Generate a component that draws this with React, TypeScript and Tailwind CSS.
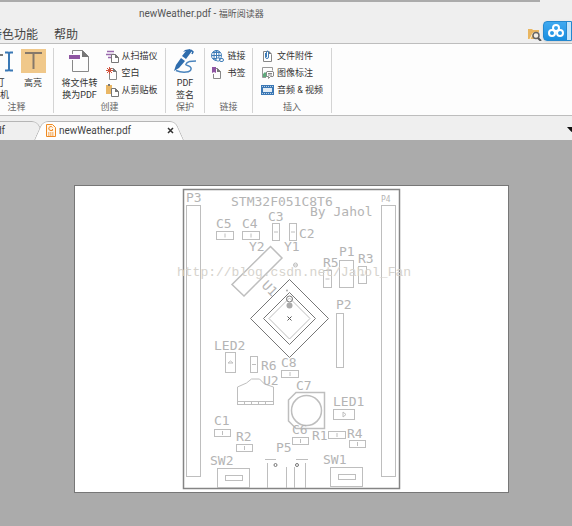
import type { ReactNode } from "react";

type Part = { x: number; y: number; w: number; h: number; mark?: "v" | "h" };
type Label = { text: string; x: number; y: number };

const parts: Part[] = [
  { x: 186, y: 205, w: 14, h: 271 },
  { x: 381, y: 205, w: 14, h: 271 },
  { x: 216, y: 231, w: 17, h: 8, mark: "v" },
  { x: 242, y: 231, w: 17, h: 8, mark: "v" },
  { x: 272, y: 223, w: 7, h: 17, mark: "h" },
  { x: 289, y: 223, w: 7, h: 17, mark: "h" },
  { x: 339, y: 260, w: 14, h: 27 },
  { x: 323, y: 270, w: 8, h: 17, mark: "h" },
  { x: 358, y: 266, w: 8, h: 17, mark: "h" },
  { x: 336, y: 313, w: 7, h: 54 },
  { x: 225, y: 352, w: 10, h: 20 },
  { x: 250, y: 356, w: 7, h: 16, mark: "h" },
  { x: 281, y: 370, w: 17, h: 7, mark: "v" },
  { x: 333, y: 409, w: 21, h: 10 },
  { x: 214, y: 429, w: 16, h: 7, mark: "v" },
  { x: 236, y: 444, w: 16, h: 7, mark: "v" },
  { x: 292, y: 437, w: 16, h: 7, mark: "v" },
  { x: 328, y: 431, w: 17, h: 7, mark: "v" },
  { x: 349, y: 440, w: 16, h: 7, mark: "v" },
  { x: 217, y: 468, w: 32, h: 19 },
  { x: 225, y: 475, w: 17, h: 5 },
  { x: 330, y: 467, w: 32, h: 19 },
  { x: 338, y: 474, w: 17, h: 5 },
];

const labels: Label[] = [
  { text: "P3", x: 186, y: 202 },
  { text: "STM32F051C8T6", x: 231, y: 206 },
  { text: "By Jahol", x: 310, y: 216 },
  { text: "C5", x: 216, y: 228 },
  { text: "C4", x: 242, y: 228 },
  { text: "C3", x: 268, y: 221 },
  { text: "C2", x: 299, y: 238 },
  { text: "Y2", x: 249, y: 251 },
  { text: "Y1", x: 284, y: 251 },
  { text: "P1", x: 339, y: 256 },
  { text: "R5", x: 323, y: 267 },
  { text: "R3", x: 358, y: 263 },
  { text: "P2", x: 336, y: 309 },
  { text: "LED2", x: 214, y: 350 },
  { text: "R6", x: 261, y: 370 },
  { text: "C8", x: 281, y: 367 },
  { text: "U2", x: 263, y: 385 },
  { text: "C7", x: 296, y: 390 },
  { text: "LED1", x: 333, y: 406 },
  { text: "C1", x: 214, y: 425 },
  { text: "R2", x: 236, y: 441 },
  { text: "C6", x: 292, y: 434 },
  { text: "R1", x: 312, y: 440 },
  { text: "R4", x: 347, y: 438 },
  { text: "P5", x: 276, y: 452 },
  { text: "SW2", x: 210, y: 465 },
  { text: "SW1", x: 323, y: 464 },
];

function Svg({ w, h, children }: { w: number; h: number; children: ReactNode }) {
  return (
    <svg width={w} height={h} viewBox={`0 0 ${w} ${h}`} fill="none" className="shrink-0" aria-hidden="true">
      {children}
    </svg>
  );
}

const TypewriterIcon = () => (
  <Svg w={25} h={25}>
    <path d="M1 7H15M8 7V20" stroke="#777" strokeWidth="2" />
    <path d="M17 4.500h3l1 1 1-1h3M17 22.500h3l1-1 1 1h3M21 5.500V22" stroke="#3a78b5" strokeWidth="2" />
  </Svg>
);

const HighlightIcon = () => (
  <Svg w={25} h={25}>
    <path fill="#f0c88a" d="M0 1h25v24H0z" />
    <path d="M4 5H21M12.500 5V21" stroke="#85786a" strokeWidth="2" />
  </Svg>
);

const ConvertIcon = () => (
  <Svg w={21} h={25}>
    <path d="M3.500 6V2.500h10l6 6v15h-16V12" stroke="#888" />
    <path d="M13 2v7h7z" fill="#777" />
    <path fill="#8e55a2" d="M0 7h11v4H0z" />
  </Svg>
);

const SignIcon = () => (
  <Svg w={24} h={25}>
    <path d="M12 2l5-1 2 2-6 8-4-3 4-5-3 1z" fill="#2f6dad" />
    <path d="M18 2l2 2-1 2" stroke="#2f6dad" strokeWidth="1.500" />
    <path d="M8 10l4 3-6 7-5 3 2-6z" fill="#2f6dad" />
    <path d="M3 22.500C9 25 19 25 18 20c-1-3-6-2-5-4 1-3 5-3 10-3" stroke="#4a84bd" strokeWidth="1.500" />
  </Svg>
);

const Sheet = () => (
  <>
    <path d="M5.500 4.500h4l3 3v5h-7z" fill="#fff" stroke="#777" />
    <path d="M9 4v4h4z" fill="#777" />
  </>
);

const ScannerIcon = () => (
  <Svg w={13} h={13}>
    <path d="M1 1.500h7M0 4.500h8M2 7.500h3" stroke="#9a6aae" strokeWidth="1.500" />
    <Sheet />
  </Svg>
);

const BlankIcon = () => (
  <Svg w={13} h={13}>
    <path d="M3.500 1.500h4l3 3v8h-7z" fill="#fff" stroke="#888" />
    <path d="M7 1v4h4z" fill="#777" />
    <path d="M3.500 0v7M0 3.500h7M1 1l5 5M6 1L1 6" stroke="#d2533d" />
  </Svg>
);

const ClipboardIcon = () => (
  <Svg w={13} h={13}>
    <path fill="#eab765" d="M0 1h6v9H0z" />
    <path fill="#777" d="M2 0h2v2H2z" />
    <Sheet />
  </Svg>
);

const LinkIcon = () => (
  <Svg w={13} h={13}>
    <circle cx="5.500" cy="5.500" r="5" stroke="#3f7db8" />
    <path d="M.5 5.500h10M5.500.5v10M2 2.500h7M2 8.500h7" stroke="#3f7db8" />
    <ellipse cx="5.500" cy="5.500" rx="2.500" ry="5" stroke="#3f7db8" />
    <rect x="5" y="8" width="4" height="3" rx="1.500" fill="#fff" stroke="#3f7db8" />
    <rect x="8.500" y="8.500" width="4" height="3" rx="1.500" stroke="#3f7db8" />
  </Svg>
);

const BookmarkIcon = () => (
  <Svg w={13} h={13}>
    <path d="M2.500 7v4.500h7V4.500l-3-3H5" stroke="#888" />
    <path d="M6 1v4h4z" fill="#777" />
    <path d="M1 0h4v6L3 5 1 6z" fill="#8e55a2" />
  </Svg>
);

const AttachIcon = () => (
  <Svg w={13} h={13}>
    <path d="M2.500 1.500h5l3 3v7h-8z" fill="#fff" stroke="#888" />
    <path d="M8 1v3h3z" fill="#777" />
    <path d="M4.500 3v4a1.500 1.500 0 003 0V2a1 1 0 00-2 0v5" stroke="#3f7db8" />
  </Svg>
);

const ImageNoteIcon = () => (
  <Svg w={13} h={13}>
    <path d="M5 10.500H1.500V.5h10v3" stroke="#999" />
    <path d="M2 10V7l2-2 2 2v3z" fill="#5faa7c" />
    <path d="M6 4.500h6l.5.500v4l-.5.500H9.500l-2 2v-2H6l-.5-.5V5z" fill="#fff" stroke="#888" />
    <path d="M7 6.500h4M7 8h4" stroke="#888" />
  </Svg>
);

const FilmIcon = () => (
  <Svg w={13} h={13}>
    <path fill="#3b78b5" d="M0 1h13v10H0z" />
    <path fill="#e3edf6" d="M2 4h9v4H2z" />
    <path d="M1 2.500h11M1 9.500h11" stroke="#b9d0e6" strokeDasharray="1 1" />
  </Svg>
);

const PdfTabIcon = () => (
  <Svg w={10} h={13}>
    <path d="M.5.500h6l3 3v9h-9z" fill="#fff5e8" stroke="#ef8a22" />
    <path d="M6.500 3.500A2 2 0 105 6.500h1.500V5" stroke="#ef8a22" />
    <path d="M2 9h6M2 11h6" stroke="#ef8a22" strokeDasharray="1.500 .5" />
  </Svg>
);

const FindFolderIcon = () => (
  <Svg w={14} h={13}>
    <path d="M0 1h4l1 1h6v9H0z" fill="#e9b661" />
    <path d="M2 11l3-6h6" stroke="#fff3d8" />
    <circle cx="8" cy="7.500" r="3" fill="#f5efe4" stroke="#666" strokeWidth="1.500" />
    <path d="M10 10l3 3" stroke="#555" strokeWidth="2" />
  </Svg>
);

const CloudIcon = () => (
  <Svg w={16} h={14}>
    <g stroke="#fff" strokeWidth="2">
      <circle cx="8" cy="4" r="3" />
      <circle cx="4" cy="9" r="3" />
      <circle cx="12" cy="9" r="3" />
    </g>
  </Svg>
);

function BigButton({ icon, lines }: { icon: ReactNode; lines: string[] }) {
  return (
    <button type="button" className="flex shrink-0 flex-col items-center gap-1 leading-3">
      {icon}
      <span className="flex flex-col items-center">
        {lines.map((line) => (
          <span key={line}>{line}</span>
        ))}
      </span>
    </button>
  );
}

function SmallButton({ icon, label }: { icon: ReactNode; label: string }) {
  return (
    <button type="button" className="flex h-[17px] items-center gap-[3px] whitespace-nowrap">
      {icon}
      {label}
    </button>
  );
}

function Group({ title, className, children }: { title: string; className: string; children: ReactNode }) {
  return (
    <section className={`mt-1 mb-0.5 flex shrink-0 flex-col border-r border-[#d4d4d4] ${className}`}>
      <div className="flex flex-1 items-start justify-center gap-4">{children}</div>
      <h2 className="text-center leading-3 text-[#666]">{title}</h2>
    </section>
  );
}

function TabShape({ fill }: { fill: string }) {
  return (
    <span className="absolute inset-0 flex" aria-hidden="true">
      <span className={`flex-1 origin-bottom-left -skew-x-[24deg] rounded-tl-md border-t border-l border-[#b5b5b5] ${fill}`} />
      <span className={`-ml-5 flex-1 origin-bottom-right skew-x-[24deg] rounded-tr-md border-t border-r border-[#b5b5b5] ${fill}`} />
    </span>
  );
}

function Board() {
  return (
    <svg viewBox="75 186 433 306" className="block w-full" role="img" aria-label="STM32F051C8T6">
      <rect x="183.500" y="189.500" width="216" height="299" fill="none" stroke="#858585" strokeWidth="1.500" />
      <g fill="none" stroke="#bebebe">
        {parts.map((p) => {
          const cx = p.x + p.w / 2 + 0.5;
          const cy = p.y + p.h / 2 + 0.5;
          return (
            <g key={`${p.x}-${p.y}`}>
              <rect x={p.x + 0.5} y={p.y + 0.5} width={p.w} height={p.h} />
              {p.mark === "v" && <path d={`M${cx} ${cy - 2}v4`} />}
              {p.mark === "h" && <path d={`M${cx - 2} ${cy}h4`} />}
            </g>
          );
        })}
        <path d="M270.500 246.500L282 258L244 296L232 284.500Z" strokeWidth="1.500" />
        <circle cx="295.500" cy="265" r="2" />
        <path d="M294 265h3" />
        <path d="M228 363l2.500-2 2.500 2zM343 412v5l3-2.500z" />
        <path d="M237.500 405V387l9-4 5-4h8l5 5 9 3v18M237 401.500h36M237 404.500h36M244.500 402v3M251.500 402v3M258.500 402v3M265.500 402v3" />
        <path d="M296 392.500h28.500v36H296l-7.500-7.500v-21z" strokeWidth="1.500" />
        <circle cx="306.500" cy="410.500" r="15" strokeWidth="1.500" />
        <path d="M265 459.500h11M296 459.500h12M267.500 463v25M286.500 467v21M305.500 463v25M294.500 467v21" />
        <path d="M289.500 298l20.500 20.500-20.500 20.500L269 318.500z" />
      </g>
      <g fill="none" stroke="#777">
        <path d="M289.500 279.500l39 39-39 39-39-39zM289.500 292.500l26 26-26 26-26-26z" />
        <path d="M287.500 316.500l4 4M291.500 316.500l-4 4" stroke="#555" />
        <circle cx="289.500" cy="299" r="3" />
        <circle cx="275.500" cy="465" r="1.500" />
        <circle cx="297" cy="465" r="1.500" />
      </g>
      <circle cx="289.500" cy="305.500" r="3" fill="#aaa" />
      <circle cx="287" cy="290.500" r="1" fill="#aaa" />
      <g fill="#b4b4b4" fontFamily="'DejaVu Sans Mono', monospace" fontSize="13">
        {labels.map((l) => (
          <text key={l.text} x={l.x} y={l.y}>
            {l.text}
          </text>
        ))}
        <text x="381" y="202" fontSize="8">
          P4
        </text>
        <text transform="translate(261 286) rotate(45)">U1</text>
      </g>
      <text x="177" y="276" fill="#d6d3cd" fontFamily="'Liberation Mono', monospace" fontSize="13">
        http://blog.csdn.net/Jahol_Fan
      </text>
    </svg>
  );
}

export default function App() {
  return (
    <div className="flex min-h-screen flex-col overflow-hidden bg-[#efefef] font-['Roboto','Noto_Sans_CJK_SC',sans-serif] text-[9px] text-[#333]">
      <header className="relative">
        <div className="mr-8 h-0.5 bg-[#ababab]" />
        <h1 className="ml-[139px] h-6 text-[10px] leading-6 text-[#555]">
          newWeather.pdf - <span className="text-[9px]">福昕阅读器</span>
        </h1>
        <div className="flex h-[17px] items-center justify-between pr-[30px]">
          <nav className="-ml-2.5 flex gap-4 text-xs leading-4 text-[#444]">
            <button type="button">特色功能</button>
            <button type="button">帮助</button>
          </nav>
          <button type="button" aria-label="查找">
            <FindFolderIcon />
          </button>
        </div>
        <button
          type="button"
          aria-label="云"
          className="absolute top-[21px] right-0 flex h-5 w-[29px] items-center rounded-l-sm border border-[#2488cf] bg-linear-to-b from-[#3fa9f0] to-[#168ee0] pl-1 shadow-sm"
        >
          <CloudIcon />
          <span className="absolute inset-y-0 right-0 w-[5px] border-l border-[#2488cf] bg-[#c5e5fa]" />
        </button>
      </header>

      <div className="flex h-[73px] border-y border-[#bdbdbd] bg-[#fdfdfd]">
        <Group title="注释" className="w-[54px] pr-5">
          <div className="flex shrink-0 gap-2">
            <BigButton icon={<TypewriterIcon />} lines={["打", "字机"]} />
            <BigButton icon={<HighlightIcon />} lines={["高亮"]} />
          </div>
        </Group>
        <Group title="创建" className="w-28">
          <BigButton icon={<ConvertIcon />} lines={["将文件转", "换为PDF"]} />
          <div className="-ml-2">
            <SmallButton icon={<ScannerIcon />} label="从扫描仪" />
            <SmallButton icon={<BlankIcon />} label="空白" />
            <SmallButton icon={<ClipboardIcon />} label="从剪贴板" />
          </div>
        </Group>
        <Group title="保护" className="w-[39px]">
          <BigButton icon={<SignIcon />} lines={["PDF", "签名"]} />
        </Group>
        <Group title="链接" className="w-12">
          <div>
            <SmallButton icon={<LinkIcon />} label="链接" />
            <SmallButton icon={<BookmarkIcon />} label="书签" />
          </div>
        </Group>
        <Group title="插入" className="w-[79px]">
          <div>
            <SmallButton icon={<AttachIcon />} label="文件附件" />
            <SmallButton icon={<ImageNoteIcon />} label="图像标注" />
            <SmallButton icon={<FilmIcon />} label="音频 & 视频" />
          </div>
        </Group>
      </div>

      <div className="flex h-6 items-end text-[10px] text-[#444]">
        <div className="relative -ml-24 h-[19px] w-[142px]">
          <TabShape fill="bg-[#efefef]" />
          <button type="button" className="relative w-full pr-[41px] text-right leading-5">
            Weather.pdf
          </button>
        </div>
        <div className="relative -ml-3 flex h-[19px] w-[150px] items-center">
          <TabShape fill="bg-[#fdfdfd]" />
          <button type="button" className="relative ml-3 flex flex-1 items-center gap-[3px]">
            <PdfTabIcon />
            newWeather.pdf
          </button>
          <button type="button" aria-label="关闭" className="relative mr-2.5">
            <Svg w={7} h={7}>
              <path d="M1 1l5 5M6 1L1 6" stroke="#333" strokeWidth="1.500" />
            </Svg>
          </button>
        </div>
        <button type="button" aria-label="更多" className="-mr-1 mb-2 ml-auto">
          <Svg w={9} h={5}>
            <path d="M0 0h9L4.500 5z" fill="#111" />
          </Svg>
        </button>
      </div>

      <main className="flex-1 bg-[#ababab] pt-[45px] pr-[63px] pb-8 pl-[74px]">
        <div className="border border-[#777] bg-white">
          <Board />
        </div>
      </main>
    </div>
  );
}
